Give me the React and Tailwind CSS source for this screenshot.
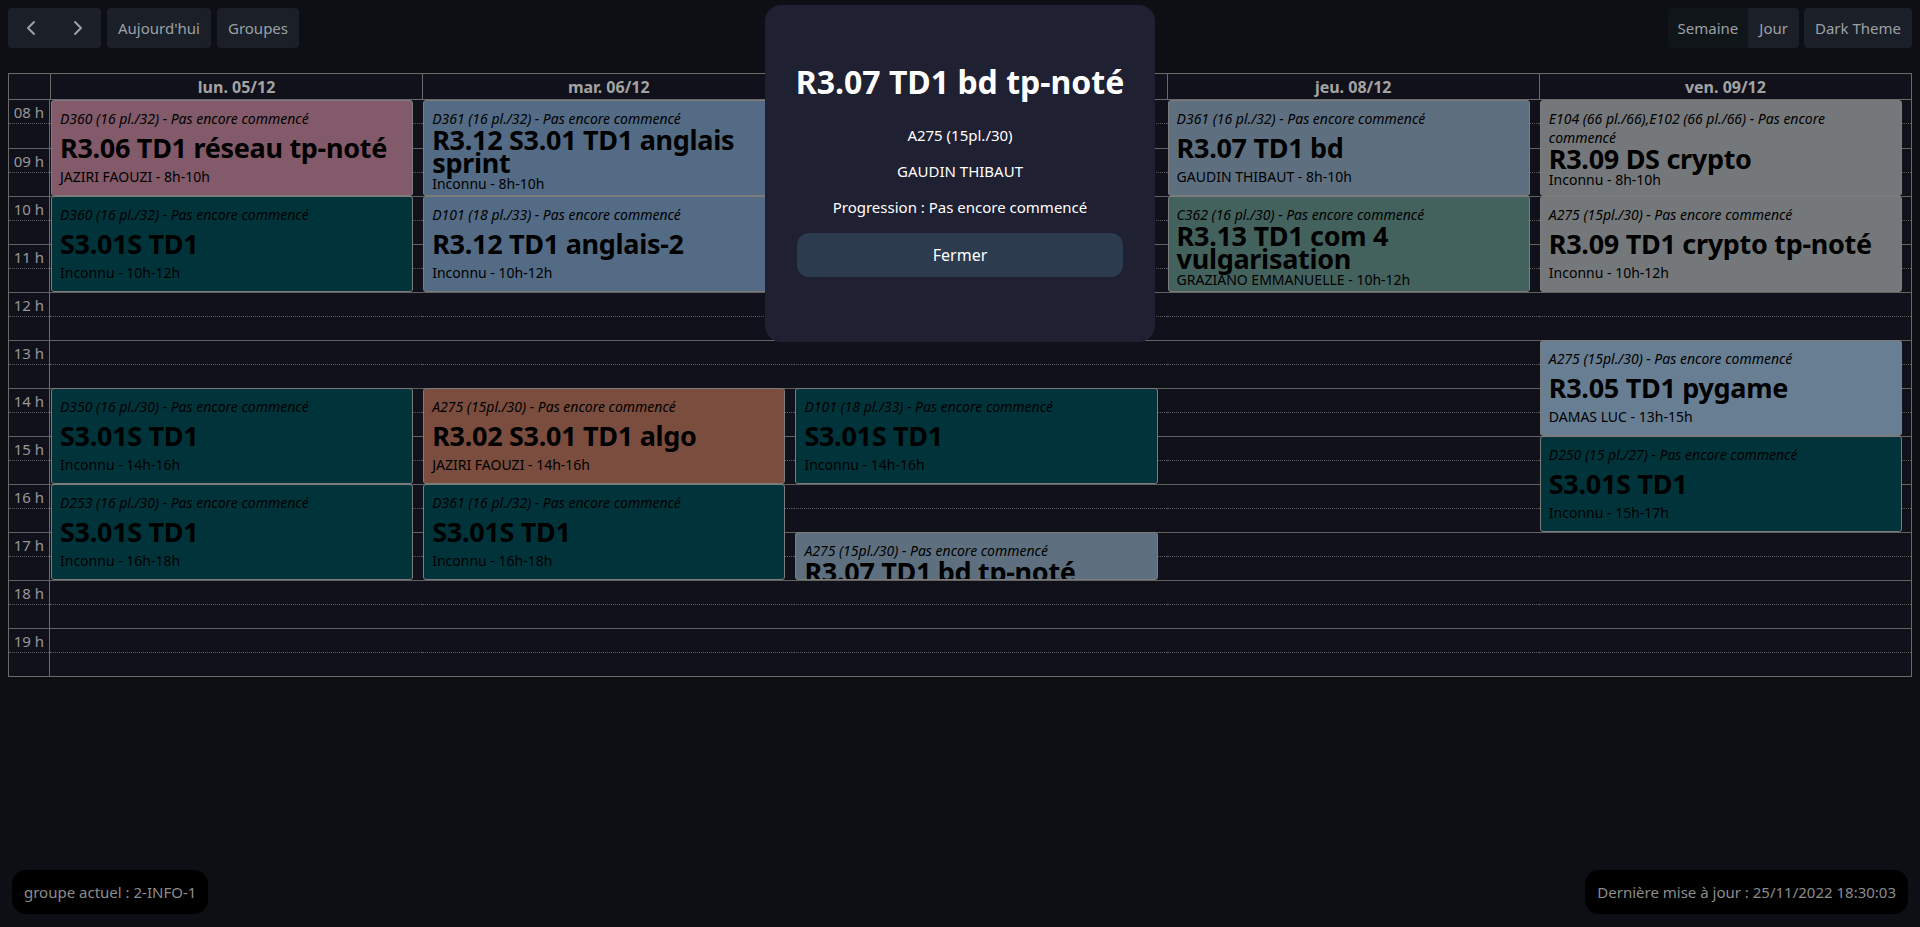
import React from "react";
import { ChevronLeft, ChevronRight } from "lucide-react";

const days = ["lun. 05/12", "mar. 06/12", "mer. 07/12", "jeu. 08/12", "ven. 09/12"];
const hours = ["08", "09", "10", "11", "12", "13", "14", "15", "16", "17", "18", "19"];

const dayCols = [
  "col-start-2",
  "col-start-3",
  "col-start-4",
  "col-start-5",
  "col-start-6",
];

const events = [
  // lun.
  { pos: "col-start-2 row-start-1 row-span-4", bg: "bg-[#835a69]", room: "D360 (16 pl./32) - Pas encore commencé", title: "R3.06 TD1 réseau tp-noté", who: "JAZIRI FAOUZI - 8h-10h" },
  { pos: "col-start-2 row-start-5 row-span-4", bg: "bg-[#00343a]", room: "D360 (16 pl./32) - Pas encore commencé", title: "S3.01S TD1", who: "Inconnu - 10h-12h" },
  { pos: "col-start-2 row-start-13 row-span-4", bg: "bg-[#00343a]", room: "D350 (16 pl./30) - Pas encore commencé", title: "S3.01S TD1", who: "Inconnu - 14h-16h" },
  { pos: "col-start-2 row-start-17 row-span-4", bg: "bg-[#00343a]", room: "D253 (16 pl./30) - Pas encore commencé", title: "S3.01S TD1", who: "Inconnu - 16h-18h" },
  // mar.
  { pos: "col-start-3 row-start-1 row-span-4", bg: "bg-[#536b84]", room: "D361 (16 pl./32) - Pas encore commencé", title: "R3.12 S3.01 TD1 anglais sprint", who: "Inconnu - 8h-10h" },
  { pos: "col-start-3 row-start-5 row-span-4", bg: "bg-[#536b84]", room: "D101 (18 pl./33) - Pas encore commencé", title: "R3.12 TD1 anglais-2", who: "Inconnu - 10h-12h" },
  { pos: "col-start-3 row-start-13 row-span-4", bg: "bg-[#7b4d3e]", room: "A275 (15pl./30) - Pas encore commencé", title: "R3.02 S3.01 TD1 algo", who: "JAZIRI FAOUZI - 14h-16h" },
  { pos: "col-start-3 row-start-17 row-span-4", bg: "bg-[#00343a]", room: "D361 (16 pl./32) - Pas encore commencé", title: "S3.01S TD1", who: "Inconnu - 16h-18h" },
  // mer.
  { pos: "col-start-4 row-start-13 row-span-4", bg: "bg-[#00343a]", room: "D101 (18 pl./33) - Pas encore commencé", title: "S3.01S TD1", who: "Inconnu - 14h-16h" },
  { pos: "col-start-4 row-start-19 row-span-2", bg: "bg-[#5e7080]", room: "A275 (15pl./30) - Pas encore commencé", title: "R3.07 TD1 bd tp-noté", who: "GAUDIN THIBAUT - 17h-18h" },
  // jeu.
  { pos: "col-start-5 row-start-1 row-span-4", bg: "bg-[#5e7080]", room: "D361 (16 pl./32) - Pas encore commencé", title: "R3.07 TD1 bd", who: "GAUDIN THIBAUT - 8h-10h" },
  { pos: "col-start-5 row-start-5 row-span-4", bg: "bg-[#44625d]", room: "C362 (16 pl./30) - Pas encore commencé", title: "R3.13 TD1 com 4 vulgarisation", who: "GRAZIANO EMMANUELLE - 10h-12h" },
  // ven.
  { pos: "col-start-6 row-start-1 row-span-4", bg: "bg-[#74787a]", room: "E104 (66 pl./66),E102 (66 pl./66) - Pas encore commencé", title: "R3.09 DS crypto", who: "Inconnu - 8h-10h" },
  { pos: "col-start-6 row-start-5 row-span-4", bg: "bg-[#74787a]", room: "A275 (15pl./30) - Pas encore commencé", title: "R3.09 TD1 crypto tp-noté", who: "Inconnu - 10h-12h" },
  { pos: "col-start-6 row-start-11 row-span-4", bg: "bg-[#687e93]", room: "A275 (15pl./30) - Pas encore commencé", title: "R3.05 TD1 pygame", who: "DAMAS LUC - 13h-15h" },
  { pos: "col-start-6 row-start-15 row-span-4", bg: "bg-[#00343a]", room: "D250 (15 pl./27) - Pas encore commencé", title: "S3.01S TD1", who: "Inconnu - 15h-17h" },
];

const HourCell = ({ children, first }) => (
  <div className={`h-12 ${first ? "" : "border-t border-[#626262]"}`}>
    <div className="h-6 border-b border-dotted border-[#5a5a5a] text-right pr-[5px] text-[15px] leading-6 text-[#979797]">
      {children}
    </div>
  </div>
);

const Event = ({ ev }) => (
  <div
    className={`${ev.pos} ${ev.bg} relative z-10 ml-[1px] mr-[9px] flex flex-col justify-between overflow-hidden rounded-[3px] border border-[#7c7c7c] px-2 py-2 text-black`}
  >
    <p className="text-[14px] italic leading-[19px]">{ev.room}</p>
    <p className="text-[27px] font-bold leading-[23px] tracking-[-0.3px]">{ev.title}</p>
    <p className="text-[14px] leading-5">{ev.who}</p>
  </div>
);

const ToolButton = ({ children, className = "" }) => (
  <button
    className={`h-10 px-[11px] rounded bg-[#1a1f28] text-[15px] text-[#9da1a6] ${className}`}
  >
    {children}
  </button>
);

export default function App() {
  return (
    <div
      className="h-screen w-full flex flex-col bg-[#0e0f15] overflow-hidden"
      style={{ fontFamily: '"Noto Sans", "Open Sans", sans-serif' }}
    >
      {/* Toolbar */}
      <div className="flex items-center justify-between px-2 pt-2">
        <div className="flex items-center gap-[6px]">
          <div className="flex h-10 rounded bg-[#1a1f28] text-[#9da1a6]">
            <button className="w-[46px] flex items-center justify-center">
              <ChevronLeft size={24} strokeWidth={2} />
            </button>
            <button className="w-[47px] flex items-center justify-center">
              <ChevronRight size={24} strokeWidth={2} />
            </button>
          </div>
          <ToolButton>Aujourd'hui</ToolButton>
          <ToolButton>Groupes</ToolButton>
        </div>
        <div className="flex items-center gap-[5px]">
          <div className="flex h-10 rounded overflow-hidden text-[15px] text-[#9da1a6]">
            <button className="px-[10px] bg-[#0f1519]">Semaine</button>
            <button className="px-[11px] bg-[#1a1f28]">Jour</button>
          </div>
          <ToolButton>Dark Theme</ToolButton>
        </div>
      </div>

      {/* Calendar */}
      <div className="mx-2 mt-[25px] border border-[#6a6a6a] bg-[#11111b]">
        {/* Header */}
        <div className="grid grid-cols-[41px_repeat(5,minmax(0,1fr))] h-[26px] border-b border-[#6a6a6a]">
          <div />
          {days.map((d) => (
            <div
              key={d}
              className="border-l border-[#6a6a6a] flex items-center justify-center text-[16px] font-bold text-[#a3a3a3]"
            >
              {d}
            </div>
          ))}
        </div>

        {/* Body */}
        <div className="grid grid-cols-[41px_repeat(5,minmax(0,1fr))] grid-rows-[repeat(24,24px)]">
          <div className="col-start-1 row-start-1 row-span-24 border-r border-[#6a6a6a]">
            {hours.map((h, i) => (
              <HourCell key={h} first={i === 0}>
                {h} h
              </HourCell>
            ))}
          </div>
          {dayCols.map((c) => (
            <div key={c} className={`${c} row-start-1 row-span-24`}>
              {hours.map((h, i) => (
                <HourCell key={h} first={i === 0} />
              ))}
            </div>
          ))}
          {events.map((ev, i) => (
            <Event key={i} ev={ev} />
          ))}
        </div>
      </div>

      <div className="flex-1" />

      {/* Footer */}
      <div className="flex items-end justify-between px-3 pb-[13px]">
        <div className="h-11 flex items-center px-3 rounded-[14px] bg-black text-[15px] text-[#8c8c8c]">
          groupe actuel : 2-INFO-1
        </div>
        <div className="h-11 flex items-center px-3 rounded-[14px] bg-black text-[15px] text-[#8c8c8c]">
          Dernière mise à jour : 25/11/2022 18:30:03
        </div>
      </div>

      {/* Event details modal */}
      <div className="fixed top-[5px] left-1/2 -translate-x-1/2 z-50 w-[390px] rounded-2xl bg-[#1f2032] px-8 pt-[53px] pb-[65px] flex flex-col items-center gap-3 text-white">
        <h2 className="text-[32px] font-bold leading-[48px] whitespace-nowrap mb-[5px]">R3.07 TD1 bd tp-noté</h2>
        <p className="text-[15px] leading-6">A275 (15pl./30)</p>
        <p className="text-[15px] leading-6">GAUDIN THIBAUT</p>
        <p className="text-[15px] leading-6">Progression : Pas encore commencé</p>
        <button className="mt-[2px] h-11 w-full rounded-xl bg-[#2c3b4e] text-[16px] text-white">
          Fermer
        </button>
      </div>
    </div>
  );
}
